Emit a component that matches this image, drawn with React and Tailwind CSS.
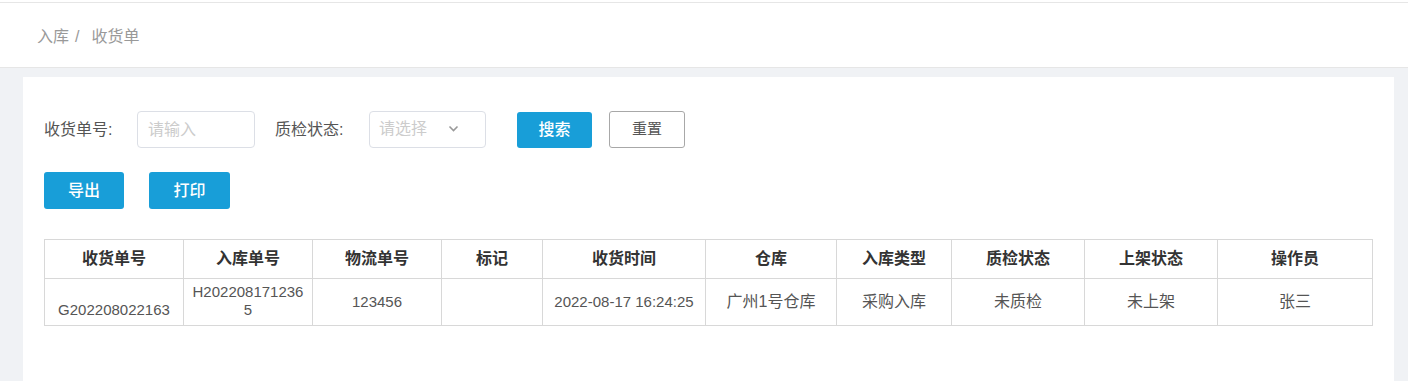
import React from "react";

const font = { fontFamily: '"Liberation Sans", Arial, "Noto Sans CJK SC", sans-serif' };

const cols = [
  { h: "收货单号", w: 139 },
  { h: "入库单号", w: 129 },
  { h: "物流单号", w: 129 },
  { h: "标记", w: 101 },
  { h: "收货时间", w: 163 },
  { h: "仓库", w: 131 },
  { h: "入库类型", w: 115 },
  { h: "质检状态", w: 133 },
  { h: "上架状态", w: 133 },
  { h: "操作员", w: 155 },
];

export default function App() {
  return (
    <div style={font} className="w-[1408px] h-[381px] overflow-hidden bg-[#f0f2f5] flex flex-col">
      <div className="bg-white pt-[2px]">
        <div className="border-t border-[#e6e6e6] border-b h-[66px] flex items-center pl-[37px] text-[16px] text-[#999] pt-[4px]">
          <span>入库</span>
          <span className="ml-[6px] mr-[12px]">/</span>
          <span>收货单</span>
        </div>
      </div>
      <div className="flex-1 bg-white ml-[23px] mr-[14px] mt-[9px] pl-[21px] pt-[34px]">
        <div className="flex items-center h-[37px] text-[16px]">
          <span className="text-[#555] w-[93px]">收货单号:</span>
          <div className="w-[118px] h-[37px] border border-[#dcdfe6] rounded-[4px] flex items-center pl-[10px] text-[#cccccc]">请输入</div>
          <span className="text-[#555] ml-[20px] w-[94px]">质检状态:</span>
          <div className="w-[117px] h-[37px] border border-[#dcdfe6] rounded-[4px] flex items-center pl-[9px] text-[#cccccc] -mt-[1px]">
            <span>请选择</span>
            <svg className="ml-[21px]" width="11" height="8" viewBox="0 0 11 8" fill="none">
              <path d="M1.5 1.5 L5.5 5.5 L9.5 1.5" stroke="#999" strokeWidth="1.6" />
            </svg>
          </div>
          <button className="ml-[31px] w-[75px] h-[36px] rounded-[3px] bg-[#189ed8] text-white text-[16px] font-medium">搜索</button>
          <button className="ml-[17px] w-[76px] h-[37px] rounded-[3px] border border-[#a8a8a8] text-[#555] text-[15px]">重置</button>
        </div>
        <div className="flex mt-[24px]">
          <button className="w-[80px] h-[37px] rounded-[3px] bg-[#189ed8] text-white text-[16px] font-medium">导出</button>
          <button className="ml-[25px] w-[81px] h-[37px] rounded-[3px] bg-[#189ed8] text-white text-[16px] font-medium">打印</button>
        </div>
        <table className="mt-[30px] border-collapse table-fixed w-[1328px] text-[16px]">
          <colgroup>
            {cols.map((c, i) => (
              <col key={i} style={{ width: c.w }} />
            ))}
          </colgroup>
          <thead>
            <tr className="h-[39px]">
              {cols.map((c, i) => (
                <th key={i} className="border border-[#d8d8d8] font-bold text-[#333] text-center align-middle">{c.h}</th>
              ))}
            </tr>
          </thead>
          <tbody>
            <tr className="h-[47px] text-[#555] text-center leading-[18px]">
              <td className="border border-[#d8d8d8] align-bottom pb-[6px] text-[15px]">G202208022163</td>
              <td className="border border-[#d8d8d8] align-middle px-[5px] break-all pb-[3px] text-[15px]">H2022081712365</td>
              <td className="border border-[#d8d8d8] align-middle text-[15px]">123456</td>
              <td className="border border-[#d8d8d8] align-middle"></td>
              <td className="border border-[#d8d8d8] align-middle text-[15px]">2022-08-17 16:24:25</td>
              <td className="border border-[#d8d8d8] align-middle">广州1号仓库</td>
              <td className="border border-[#d8d8d8] align-middle">采购入库</td>
              <td className="border border-[#d8d8d8] align-middle">未质检</td>
              <td className="border border-[#d8d8d8] align-middle">未上架</td>
              <td className="border border-[#d8d8d8] align-middle">张三</td>
            </tr>
          </tbody>
        </table>
      </div>
    </div>
  );
}
